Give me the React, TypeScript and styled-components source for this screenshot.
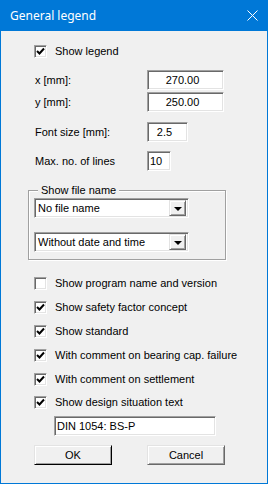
import React, { useState } from 'react';
import styled, { createGlobalStyle } from 'styled-components';

const Global = createGlobalStyle`
    html, body {
        margin: 0;
        padding: 0;
        background: #ffffff;
    }
    * {
        box-sizing: border-box;
    }
`;

const sysFont = `"Liberation Sans", Arial, sans-serif`;

const Window = styled.div`
    width: 268px;
    height: 484px;
    background: #f0f0f0;
    border: 1px solid #0078d7;
    border-top: none;
    display: flex;
    flex-direction: column;
    font-family: ${sysFont};
    font-size: 11px;
    color: #000;
`;

const TitleBar = styled.div`
    height: 31px;
    margin: 0 -1px;
    background: #0078d7;
    display: flex;
    align-items: center;
    justify-content: space-between;
    padding: 0 10px 1px 10px;
    color: #fff;
    font-family: "Noto Sans", "Liberation Sans", sans-serif;
    font-size: 12px;
`;

const CloseIcon = styled.svg`
    width: 11px;
    height: 11px;
    margin-top: 1px;
`;

const Body = styled.div`
    display: flex;
    flex-direction: column;
    padding-left: 33px;
`;

const CheckRow = styled.label<{ $top: number }>`
    display: flex;
    align-items: center;
    height: 13px;
    margin-top: ${p => p.$top}px;
    cursor: default;
`;

const Box = styled.span`
    width: 13px;
    height: 13px;
    flex: none;
    background: #fff;
    border-top: 1px solid #a0a0a0;
    border-left: 1px solid #a0a0a0;
    border-right: 1px solid #fff;
    border-bottom: 1px solid #fff;
    box-shadow: inset 1px 1px #696969, inset -1px -1px #e3e3e3;
    display: flex;
    align-items: center;
    justify-content: center;
`;

const CheckLabel = styled.span`
    margin-left: 8px;
    line-height: 13px;
    white-space: nowrap;
`;

const FieldRow = styled.div<{ $top: number }>`
    display: grid;
    grid-template-columns: 113px auto;
    align-items: center;
    margin-top: ${p => p.$top}px;
    height: 20px;
`;

const FieldLabel = styled.span`
    padding-left: 1px;
`;

const Sunken = styled.div<{ $w: number; $center?: boolean }>`
    width: ${p => p.$w}px;
    height: 20px;
    background: #fff;
    border-top: 1px solid #a0a0a0;
    border-left: 1px solid #a0a0a0;
    border-right: 1px solid #fff;
    border-bottom: 1px solid #fff;
    box-shadow: inset 1px 1px #696969, inset -1px -1px #e3e3e3;
    display: flex;
    align-items: center;
    justify-content: ${p => (p.$center ? 'center' : 'flex-start')};
    padding: ${p => (p.$center ? '0 6px 0 0' : '0 3px 0 2px')};
    white-space: nowrap;
`;

const Group = styled.div`
    position: relative;
    margin-top: 19px;
    margin-left: -6px;
    width: 198px;
    height: 70px;
    border: 1px solid #a0a0a0;
    box-shadow: inset 1px 1px #fff, 1px 1px #fff;
    padding: 7px 0 0 5px;
    display: flex;
    flex-direction: column;
    gap: 14px;
`;

const GroupTitle = styled.span`
    position: absolute;
    top: -8px;
    left: 9px;
    padding: 0 3px;
    background: #f0f0f0;
    line-height: 14px;
`;

const Combo = styled.div`
    width: 155px;
    height: 20px;
    background: #fff;
    border-top: 1px solid #a0a0a0;
    border-left: 1px solid #a0a0a0;
    border-right: 1px solid #fff;
    border-bottom: 1px solid #fff;
    box-shadow: inset 1px 1px #696969, inset -1px -1px #e3e3e3;
    display: flex;
    align-items: center;
    padding: 2px 2px 2px 3px;
`;

const ComboText = styled.span`
    flex: 1;
    white-space: nowrap;
`;

const ComboButton = styled.span`
    width: 17px;
    height: 16px;
    background: #f0f0f0;
    border-top: 1px solid #e3e3e3;
    border-left: 1px solid #e3e3e3;
    border-right: 1px solid #696969;
    border-bottom: 1px solid #696969;
    box-shadow: inset 1px 1px #fff, inset -1px -1px #a0a0a0;
    display: flex;
    align-items: center;
    justify-content: center;
`;

const Arrow = styled.span`
    width: 0;
    height: 0;
    margin-top: 1px;
    border-left: 4px solid transparent;
    border-right: 4px solid transparent;
    border-top: 4px solid #000;
`;

const TextLine = styled(Sunken)`
    margin-top: 7px;
    margin-left: 20px;
`;

const ButtonRow = styled.div`
    display: flex;
    gap: 35px;
    margin-top: 9px;
`;

const Button = styled.button<{ $default?: boolean }>`
    width: 78px;
    height: 20px;
    padding: 0;
    background: #f0f0f0;
    font-family: ${sysFont};
    font-size: 11px;
    color: #000;
    border-top: 1px solid #e3e3e3;
    border-left: 1px solid #e3e3e3;
    border-right: 1px solid ${p => (p.$default ? '#000' : '#696969')};
    border-bottom: 1px solid ${p => (p.$default ? '#000' : '#696969')};
    box-shadow: inset 1px 1px #fff, inset -1px -1px #a0a0a0;
`;

const Check = ({ on }: { on: boolean }) => (
    <Box>
        {on && (
            <svg width="9" height="9" viewBox="0 0 9 9">
                <path d="M1 4 L3.5 6.5 L8 1.5" stroke="#000" strokeWidth="2" fill="none" />
            </svg>
        )}
    </Box>
);

const options = [
    { label: 'Show program name and version', on: false, top: 17 },
    { label: 'Show safety factor concept', on: true, top: 11 },
    { label: 'Show standard', on: true, top: 11 },
    { label: 'With comment on bearing cap. failure', on: true, top: 11 },
    { label: 'With comment on settlement', on: true, top: 11 },
    { label: 'Show design situation text', on: true, top: 10 },
];

const App = () => {
    const [checks, setChecks] = useState<boolean[]>(options.map(o => o.on));
    const [legend, setLegend] = useState<boolean>(true);
    const toggle = (i: number) => setChecks(checks.map((c, j) => (j === i ? !c : c)));

    return (
        <>
            <Global />
            <Window>
                <TitleBar>
                    <span>General legend</span>
                    <CloseIcon viewBox="0 0 11 11">
                        <path d="M0.5 0.5 L10.5 10.5 M10.5 0.5 L0.5 10.5" stroke="#fff" strokeWidth="1" />
                    </CloseIcon>
                </TitleBar>
                <Body>
                    <CheckRow $top={14} onClick={() => setLegend(!legend)}>
                        <Check on={legend} />
                        <CheckLabel>Show legend</CheckLabel>
                    </CheckRow>
                    <FieldRow $top={12}>
                        <FieldLabel>x [mm]:</FieldLabel>
                        <Sunken $w={77} $center>270.00</Sunken>
                    </FieldRow>
                    <FieldRow $top={2}>
                        <FieldLabel>y [mm]:</FieldLabel>
                        <Sunken $w={77} $center>250.00</Sunken>
                    </FieldRow>
                    <FieldRow $top={10}>
                        <FieldLabel>Font size [mm]:</FieldLabel>
                        <Sunken $w={41} $center>2.5</Sunken>
                    </FieldRow>
                    <FieldRow $top={9}>
                        <FieldLabel>Max. no. of lines</FieldLabel>
                        <Sunken $w={24}>10</Sunken>
                    </FieldRow>
                    <Group>
                        <GroupTitle>Show file name</GroupTitle>
                        <Combo>
                            <ComboText>No file name</ComboText>
                            <ComboButton><Arrow /></ComboButton>
                        </Combo>
                        <Combo>
                            <ComboText>Without date and time</ComboText>
                            <ComboButton><Arrow /></ComboButton>
                        </Combo>
                    </Group>
                    {options.map((o, i) => (
                        <CheckRow key={o.label} $top={o.top} onClick={() => toggle(i)}>
                            <Check on={checks[i]} />
                            <CheckLabel>{o.label}</CheckLabel>
                        </CheckRow>
                    ))}
                    <TextLine $w={162}>DIN 1054: BS-P</TextLine>
                    <ButtonRow>
                        <Button $default>OK</Button>
                        <Button>Cancel</Button>
                    </ButtonRow>
                </Body>
            </Window>
        </>
    );
};

export default App;
